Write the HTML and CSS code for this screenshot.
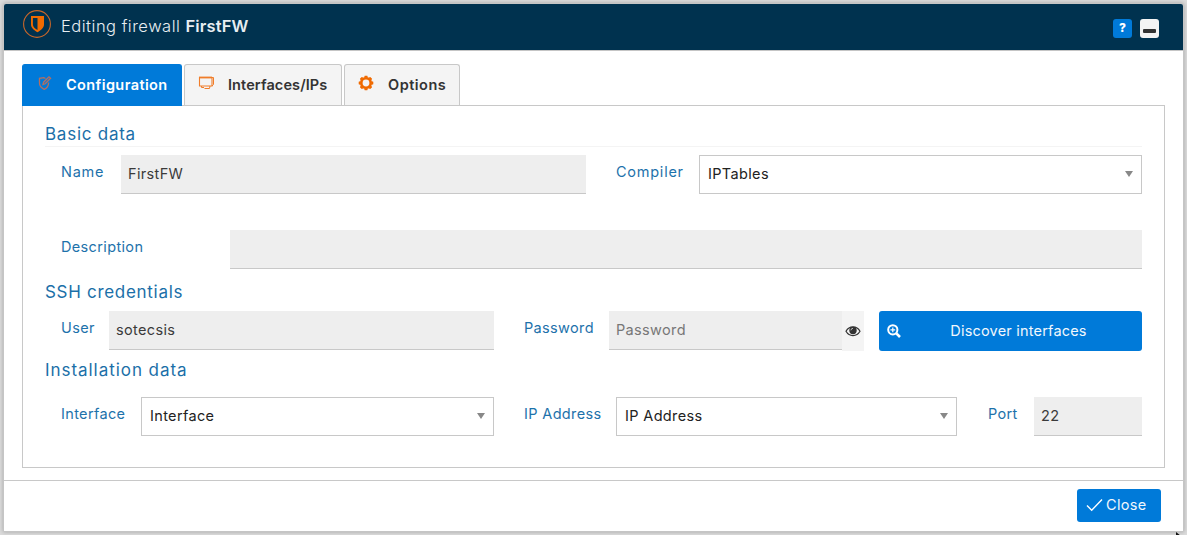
FILE: index.html
```html
<!DOCTYPE html>
<html lang="en">
<head>
<meta charset="utf-8">
<title>Editing firewall FirstFW</title>
<link rel="stylesheet" href="styles.css">
</head>
<body>
<div class="dialog">
  <header class="titlebar">
    <svg class="logo" width="30" height="30" viewBox="0 0 30 30"><circle cx="15" cy="15" r="13.4" fill="none" stroke="#c8672a" stroke-width="1.1"/><path fill="#f06a00" fill-rule="evenodd" d="M9 7h13v8.500c0 3.200-2.800 5.600-6.500 7.700C11.800 21.100 9 18.700 9 15.500zM10.900 9v6.500c0 2.200 1.700 3.800 4.600 5.400V9z"/></svg>
    <h1 class="title">Editing firewall <b class="title-name">FirstFW</b></h1>
    <button class="tool help">?</button>
    <button class="tool minimize"><span class="dash"></span></button>
  </header>
  <main class="content">
    <nav class="tabs">
      <a class="tab active"><svg class="tab-icon" width="16" height="16" viewBox="0 0 16 16"><g fill="none" stroke="#b56f60" stroke-width="1.300"><path d="M8.500 3.500L6.800 2.700 2.500 3.300v5c0 3 2 4.800 4.700 6 2.700-1.200 4.300-3 4.300-6V7.500"/><path d="M6 9.500l.6-2.300L12 1.800l1.600 1.500L8.200 8.800z"/></g></svg><span class="t-conf">Configuration</span></a>
      <a class="tab"><svg class="tab-icon" width="16" height="16" viewBox="0 0 16 16"><g fill="none" stroke="#f07d2a"><path d="M1.500 2.500h12.500v8.500H1.500z" stroke-width="1.100"/><path d="M1 2.500h13" stroke-width="1.800"/><path d="M14 2.500h1.500v7L14 11M3.500 11v1.500H6M12 11l-.5 2.500H6.500"/></g></svg><span class="t-int">Interfaces/IPs</span></a>
      <a class="tab"><svg class="tab-icon" width="16" height="16" viewBox="0 0 16 16"><g transform="translate(8 8)"><circle r="4.700" fill="none" stroke="#f06a00" stroke-width="2.600"/><path fill="#f06a00" d="M-2-5.300L-1.300-7.300H1.300L2-5.300zM-2 5.300L-1.300 7.300H1.300L2 5.300zM5.300-2L7.300-1.300V1.300L5.300 2zM-5.300-2L-7.300-1.300V1.300L-5.300 2z"/><path transform="rotate(45)" fill="#f06a00" d="M-2-5.300L-1.300-7.300H1.300L2-5.300zM-2 5.300L-1.300 7.300H1.300L2 5.300zM5.300-2L7.300-1.300V1.300L5.300 2zM-5.300-2L-7.300-1.300V1.300L-5.300 2z"/></g></svg><span class="t-opt">Options</span></a>
    </nav>
    <section class="panel">
      <h2 class="heading h-basic">Basic data</h2>
      <div class="row row-name">
        <label class="label wide">Name</label><input class="field" value="FirstFW">
        <label class="label wide">Compiler</label><div class="select">IPTables<i class="caret"></i></div>
      </div>
      <div class="row row-desc">
        <label class="label">Description</label><input class="field">
      </div>
      <h2 class="heading h-ssh">SSH credentials</h2>
      <div class="row row-ssh">
        <label class="label">User</label><input class="field" value="sotecsis">
        <label class="label">Password</label><input class="field" placeholder="Password">
        <span class="eye"><svg width="16" height="12" viewBox="0 0 16 12"><path d="M1 6.200C4.300.4 11.700.4 15 6.200 11.700 12 4.300 12 1 6.200z" fill="#f4f4f4" stroke="#333" stroke-width="1.200"/><circle cx="8" cy="5.500" r="3.700" fill="#333"/><path d="M5.900 5.300A2.200 2.200 0 0 1 8 3.300" fill="none" stroke="#ddd" stroke-width=".8"/></svg></span>
        <button class="discover"><svg width="14" height="14" viewBox="0 0 14 14"><circle cx="5.800" cy="5.800" r="4.600" fill="none" stroke="#fff" stroke-width="2"/><path d="M9.300 9.300l3.700 3.700" stroke="#fff" stroke-width="2.600"/><path d="M3.400 5.800h4.800M5.800 3.400v4.800" stroke="#fff" stroke-width="1.200"/></svg><span>Discover interfaces</span></button>
      </div>
      <h2 class="heading h-install">Installation data</h2>
      <div class="row row-install">
        <label class="label">Interface</label><div class="select">Interface<i class="caret"></i></div>
        <label class="label">IP Address</label><div class="select">IP Address<i class="caret"></i></div>
        <label class="label">Port</label><input class="field" value="22">
      </div>
    </section>
  </main>
  <footer class="footer">
    <button class="close"><svg width="17" height="14" viewBox="0 0 17 14"><path d="M1 7.500l4.700 4.700L16 1.500" fill="none" stroke="#fff" stroke-width="1.400"/></svg><span>Close</span></button>
  </footer>
</div>
<svg class="cursor" width="6" height="4" viewBox="0 0 6 4"><path d="M0 0l5 4H0z" fill="#111"/></svg>
</body>
</html>
```
FILE: styles.css
```css
* { box-sizing: border-box; }
body {
  margin: 0;
  height: 535px;
  padding: 3px;
  overflow: hidden;
  background: #dcdcdc;
  font: 14.5px/20px Inter, "Open Sans", sans-serif;
  letter-spacing: .35px;
  color: #333;
}
button, input { font: inherit; letter-spacing: inherit; border: 0; margin: 0; }
.dialog {
  display: flex;
  flex-direction: column;
  width: 1181px;
  height: 529px;
  background: #fff;
  border: 1px solid #c5c5c5;
  border-radius: 3px 3px 0 0;
  box-shadow: 0 0 4px rgba(0, 0, 0, .25);
}
.titlebar {
  display: flex;
  align-items: flex-start;
  height: 47px;
  padding: 5px 24px 0 18px;
  background: #00324f;
  border-bottom: 1px solid #c5c5c5;
  border-radius: 2px 2px 0 0;
}
.title { margin: 7px auto 0 9px; font-size: 16.5px; font-weight: 300; line-height: 20px; letter-spacing: .5px; color: #e8eef2; }
.title-name { font-weight: 600; letter-spacing: .15px; }
.tool { display: flex; justify-content: center; width: 19px; height: 19px; margin: 10px 0 0; padding: 0; border-radius: 3px; }
.help { background: #007ad9; color: #fff; font-size: 12px; font-weight: 800; line-height: 18px; letter-spacing: 0; }
.minimize { margin-left: 8px; background: #f4f4f4; }
.dash { width: 13px; height: 4px; margin-top: 10px; background: #333; border-radius: 1px; }
.content { flex: 1; padding: 13px 18px 0; }
.tabs { display: flex; gap: 2px; height: 41px; }
.tab {
  display: flex;
  padding: 10px 0 0 15px;
  height: 41px;
  width: 158px;
  background: #f4f4f4;
  border: 1px solid #c8c8c8;
  border-bottom: 0;
  border-radius: 3px 3px 0 0;
  font-weight: 600;
  letter-spacing: .1px;
}
.tab.active { width: 160px; height: 42px; padding-left: 14px; background: #007ad9; border-color: #007ad9; color: #fff; letter-spacing: .4px; z-index: 1; }
.tab:nth-child(2) { padding-left: 13px; }
.tab:last-child { width: 116px; padding-left: 13px; letter-spacing: .5px; }
.tab-icon { flex: none; margin-right: 13px; }
.tab:nth-child(2) .tab-icon { margin-right: 14px; }
.tab:last-child .tab-icon { margin-right: 14px; }
.panel { height: 363px; padding: 18px 22px 0; border: 1px solid #c8c8c8; }
.heading { margin: 0; font-size: 17px; font-weight: 400; line-height: 20px; letter-spacing: .75px; color: #1b6fa8; }
.h-basic { height: 23px; border-bottom: 1px solid #f4f4f4; }
.h-ssh { margin-top: 13px; letter-spacing: .7px; }
.h-install { margin-top: 10px; letter-spacing: .95px; }
.row { display: grid; padding-left: 16px; height: 39px; }
.row-name { grid-template-columns: 60px 465px 30px 83px 443px; margin-top: 8px; }
.row-name .label:nth-of-type(2) { grid-column: 4; }
.row-desc { grid-template-columns: 169px 912px; margin-top: 36px; }
.row-ssh { grid-template-columns: 48px 385px 30px 85px 233px 22px 15px 263px; margin-top: 9px; }
.row-ssh .label:nth-of-type(2), .row-install .label:nth-of-type(2) { grid-column: 4; }
.row-ssh .discover { grid-column: 8; }
.row-install { grid-template-columns: 80px 353px 30px 92px 341px 31px 46px 108px; margin-top: 17px; }
.row-install .label:nth-of-type(3) { grid-column: 7; }
.label { padding-top: 7px; color: #1d72ab; white-space: nowrap; }
.label.wide { letter-spacing: .75px; }
.field { width: 100%; height: 39px; padding: 0 7px 2px; background: #eee; border-bottom: 1px solid #c8c8c8; border-radius: 0; color: #3a3a3a; outline: 0; }
.field::placeholder { color: #777; opacity: 1; }
.select { display: flex; align-items: center; justify-content: space-between; height: 39px; padding: 0 8px 2px; border: 1px solid #c8c8c8; color: #222; }
.caret { border: 4.500px solid transparent; border-top: 6px solid #888; border-bottom: 0; }
.eye { display: flex; align-items: center; justify-content: center; background: #f4f4f4; }
.discover { display: flex; align-items: center; height: 40px; padding: 0 0 0 8px; background: #007ad9; color: #f0f7fd; border-radius: 3px; letter-spacing: .2px; }
.discover span { flex: 1; padding-right: 6px; }
.footer { display: flex; justify-content: flex-end; height: 51px; padding: 8px 22px 0 0; border-top: 1px solid #c8c8c8; }
.close { display: flex; align-items: center; gap: 3px; width: 84px; height: 33px; padding: 0 0 1px 9px; background: #007ad9; color: #f0f7fd; border-radius: 3px; }
.cursor { position: absolute; left: 1176px; top: 532px; }
```
